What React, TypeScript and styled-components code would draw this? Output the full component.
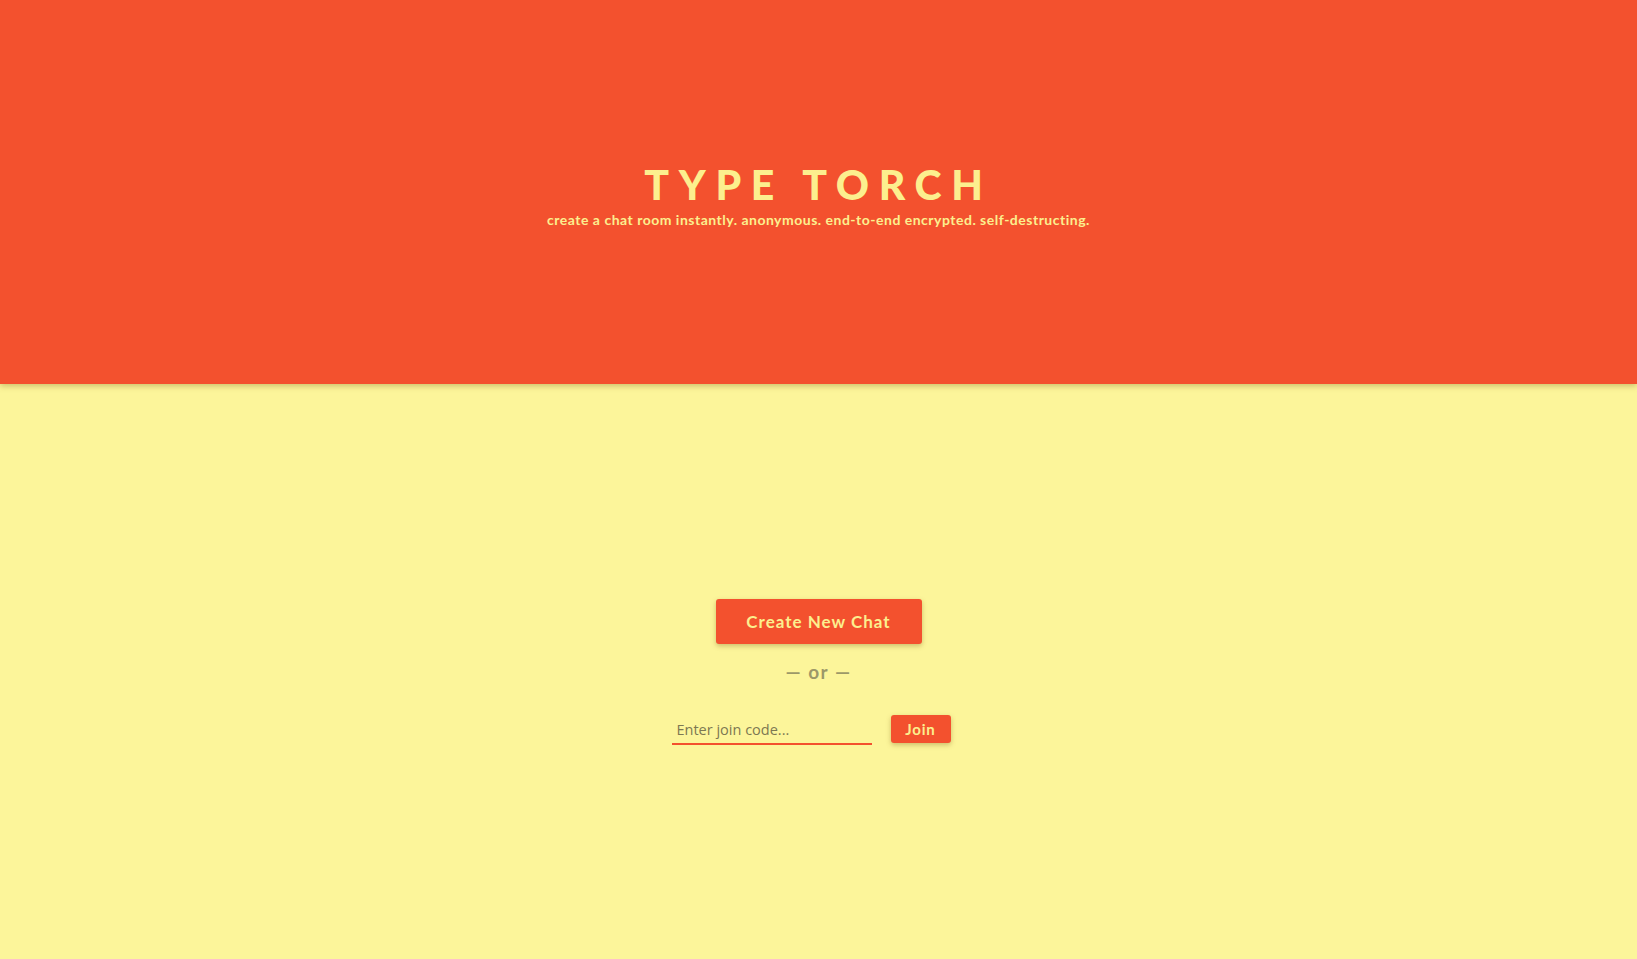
import React from "react";
import styled, { createGlobalStyle } from "styled-components";

const Global = createGlobalStyle`
  html, body { margin: 0; padding: 0; }
  body { background: #fcf59a; font-family: "Lato", "Open Sans", sans-serif; }
  * { box-sizing: border-box; }
`;

const Page = styled.div`
  display: flex;
  flex-direction: column;
  min-height: 959px;
  background: #fcf59a;
`;

const Header = styled.header`
  height: 384px;
  background: #f3512e;
  display: flex;
  flex-direction: column;
  align-items: center;
  justify-content: center;
  box-shadow: 0 2px 6px rgba(120, 90, 20, 0.35);
  position: relative;
  z-index: 1;
  padding-top: 7px;
`;

const Title = styled.h1`
  margin: 0;
  font-family: "Lato", sans-serif;
  font-weight: 900;
  font-size: 41px;
  letter-spacing: 9.7px;
  color: #fcef8e;
  line-height: 1;
`;

const Subtitle = styled.p`
  margin: 8px 0 0;
  font-family: "Lato", sans-serif;
  font-weight: 700;
  font-size: 14px;
  letter-spacing: 0.5px;
  color: #fcef8e;
  line-height: 1;
`;

const Main = styled.main`
  flex: 1;
  display: flex;
  flex-direction: column;
  align-items: center;
  justify-content: center;
`;

const PrimaryButton = styled.button`
  width: 206px;
  height: 45px;
  border: none;
  border-radius: 3px;
  background: #f3512e;
  color: #fcef8e;
  font-family: "Lato", sans-serif;
  font-weight: 700;
  font-size: 17px;
  letter-spacing: 1px;
  box-shadow: 0 2px 5px rgba(120, 90, 20, 0.35);
  cursor: pointer;
`;

const Divider = styled.div`
  margin-top: 17px;
  font-family: "Lato", sans-serif;
  font-weight: 700;
  font-size: 19px;
  letter-spacing: 1.5px;
  color: #9c9868;
  line-height: 22px;
`;

const JoinRow = styled.div`
  margin-top: 31px;
  display: flex;
  align-items: center;
  gap: 19px;
  padding-right: 15px;
`;

const CodeInput = styled.input`
  width: 200px;
  height: 31px;
  border: none;
  border-bottom: 2px solid #f3512e;
  background: transparent;
  padding: 2px 5px 0;
  font-family: "Open Sans", sans-serif;
  font-size: 14.5px;
  color: #5a5630;
  outline: none;
  &::placeholder { color: #7d7852; }
`;

const SmallButton = styled.button`
  width: 60px;
  height: 28px;
  border: none;
  border-radius: 3px;
  background: #f3512e;
  color: #fcef8e;
  font-family: "Lato", sans-serif;
  font-weight: 700;
  font-size: 15px;
  letter-spacing: 0.8px;
  box-shadow: 0 2px 5px rgba(120, 90, 20, 0.35);
  cursor: pointer;
`;

export default function App() {
  return (
    <>
      <Global />
      <Page>
        <Header>
          <Title>TYPE TORCH</Title>
          <Subtitle>
            create a chat room instantly. anonymous. end-to-end encrypted. self-destructing.
          </Subtitle>
        </Header>
        <Main>
          <PrimaryButton>Create New Chat</PrimaryButton>
          <Divider>— or —</Divider>
          <JoinRow>
            <CodeInput placeholder="Enter join code..." />
            <SmallButton>Join</SmallButton>
          </JoinRow>
        </Main>
      </Page>
    </>
  );
}
